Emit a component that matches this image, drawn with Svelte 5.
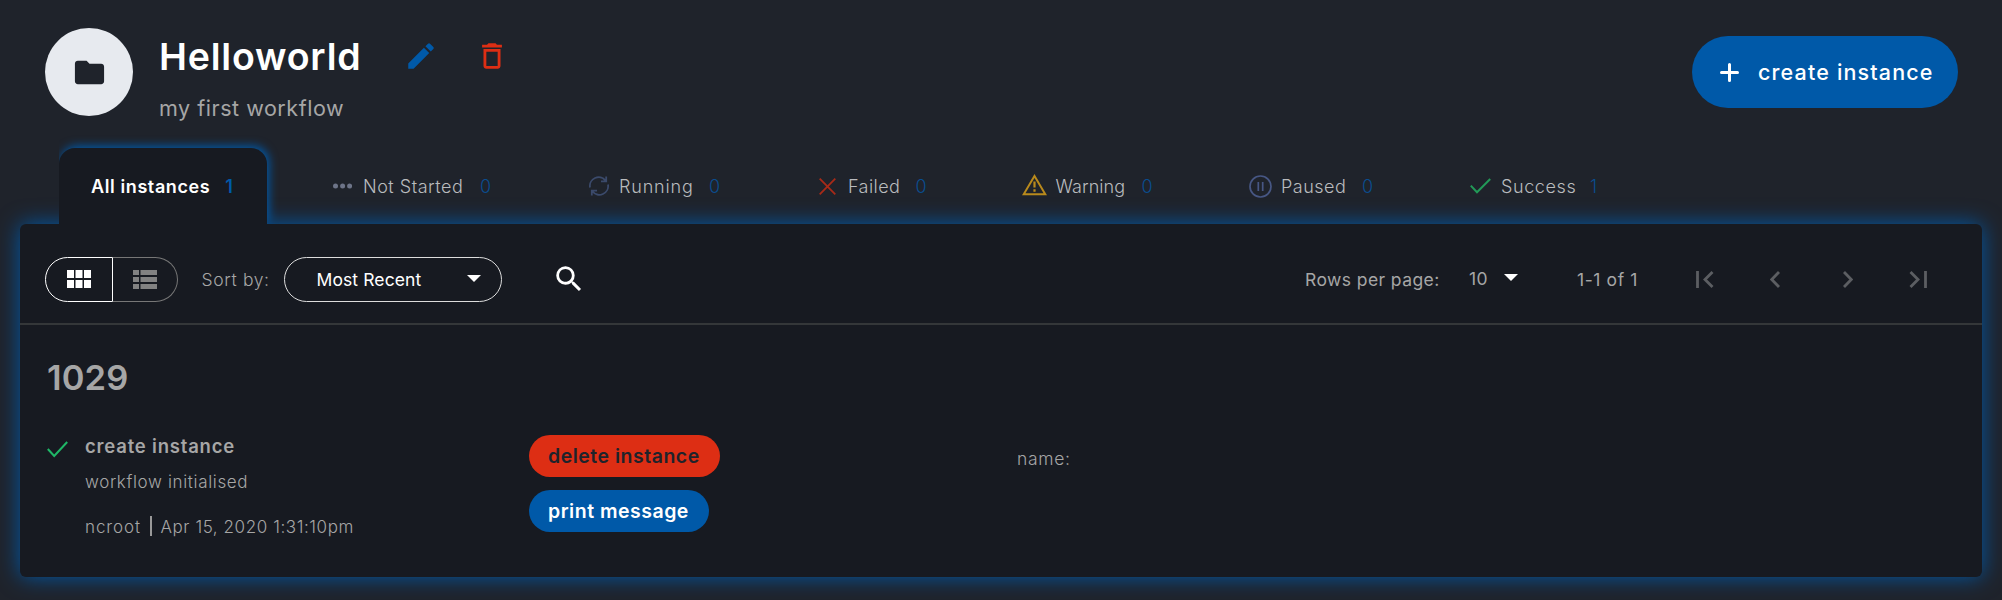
<script>
  // gap: space before the tab; icon / label / count: column widths in px
  const tabs = [
    { name: 'Not Started', count: 0, icon: 'dots', gap: 66, iconW: 30, labelW: 117, countW: 13, ls: 0.51 },
    { name: 'Running', count: 0, icon: 'sync', gap: 96, iconW: 30, labelW: 90, countW: 13, ls: 0.83 },
    { name: 'Failed', count: 0, icon: 'cross', gap: 97, iconW: 29, labelW: 67.5, countW: 13, ls: 0.42 },
    { name: 'Warning', count: 0, icon: 'warning', gap: 93.5, iconW: 33.5, labelW: 86, countW: 13, ls: 0.05 },
    { name: 'Paused', count: 0, icon: 'pause', gap: 94.5, iconW: 32, labelW: 81, countW: 13, ls: 0.5 },
    { name: 'Success', count: 1, icon: 'check', gap: 94.5, iconW: 31.5, labelW: 89, countW: 13, ls: 0.6 }
  ];
</script>

<div class="page">
  <header>
    <div class="avatar">
      <svg width="35" height="35" viewBox="0 0 24 24"><path fill="#1f232b" d="M10 4H4c-1.100 0-2 .9-2 2v12c0 1.100.9 2 2 2h16c1.100 0 2-.9 2-2V8c0-1.100-.9-2-2-2h-8z"/></svg>
    </div>
    <div class="heading">
      <div class="title-row">
        <h1>Helloworld</h1>
        <svg class="edit" width="34" height="34" viewBox="0 0 24 24"><path fill="#0059a8" d="M3 17.250V21h3.750L17.810 9.940l-3.750-3.750zM20.710 7.040a1 1 0 0 0 0-1.410l-2.340-2.340a1 1 0 0 0-1.410 0l-1.830 1.830 3.750 3.750z"/></svg>
        <svg class="trash" width="34" height="34" viewBox="0 0 24 24"><path fill="#dd2e14" d="M6 19c0 1.100.9 2 2 2h8c1.100 0 2-.9 2-2V7H6zM8 9h8v10H8zM15.500 4l-1-1h-5l-1 1H5v2h14V4z"/></svg>
      </div>
      <p>my first workflow</p>
    </div>
    <button class="create">
      <svg width="19" height="19" viewBox="0 0 19 19"><path d="M9.500 1.500v16M1.500 9.500h16" stroke="#fff" stroke-width="3" stroke-linecap="round"/></svg>
      <span>create instance</span>
    </button>
  </header>

  <nav>
    <div class="active"><span>All instances</span><b>1</b></div>
    {#each tabs as t}
      <div class="tab" style:margin-left="{t.gap}px">
        <i style:width="{t.iconW}px">
          {#if t.icon === 'dots'}
            <svg width="19" height="6" viewBox="0 0 19 6" fill="#6d7488"><circle cx="2.500" cy="3" r="2.500"/><circle cx="9.600" cy="3" r="2.500"/><circle cx="16.600" cy="3" r="2.500"/></svg>
          {:else if t.icon === 'sync'}
            <svg width="20" height="20" viewBox="0 0 20 20" fill="none" stroke="#3b4a6b" stroke-width="1.800"><path d="M1 11.500A8.800 8.800 0 0 1 16.500 4.500M17.200 0.500v4.800h-5.200M19 8.500A8.800 8.800 0 0 1 3.500 15.500M2.800 19.500v-4.800h5.200"/></svg>
          {:else if t.icon === 'cross'}
            <svg width="17" height="17" viewBox="0 0 17 17" fill="none" stroke="#a82a18" stroke-width="1.800"><path d="M.7.7l15.600 15.600M16.300.7L.7 16.300"/></svg>
          {:else if t.icon === 'warning'}
            <svg class="up" width="25" height="22" viewBox="0 0 25 22" fill="none" stroke="#b98a1c" stroke-width="2"><path d="M12.500 2L23.300 20.300H1.700z"/><path d="M12.500 7.500v6M12.500 15.200v2.600" stroke-width="2.200"/></svg>
          {:else if t.icon === 'pause'}
            <svg width="23" height="23" viewBox="0 0 23 23" fill="none" stroke="#475784" stroke-width="1.700"><circle cx="11.500" cy="11.500" r="10.500"/><path d="M9.300 7v9M13.700 7v9"/></svg>
          {:else}
            <svg width="21" height="16" viewBox="0 0 21 16" fill="none" stroke="#229a58" stroke-width="2"><path d="M.8 7.600L7 14.200 20.200 1"/></svg>
          {/if}
        </i>
        <span style:width="{t.labelW}px" style:letter-spacing="{t.ls}px">{t.name}</span>
        <em style:width="{t.countW}px">{t.count}</em>
      </div>
    {/each}
  </nav>

  <main>
    <div class="toolbar">
      <div class="toggle">
        <div class="on"><svg width="24" height="18" viewBox="0 0 24 18" fill="#fff"><path d="M0 0h7v8H0zM8.500 0h7v8h-7zM17 0h7v8h-7zM0 10h7v8H0zM8.500 10h7v8h-7zM17 10h7v8h-7z"/></svg></div>
        <div class="off"><svg width="24" height="19" viewBox="0 0 24 19" fill="#828282"><path d="M0 0h6v5H0zM7.500 0H24v5H7.500zM0 7h6v5H0zM7.500 7H24v5H7.500zM0 14h6v5H0zM7.500 14H24v5H7.500z"/></svg></div>
      </div>
      <span class="sort">Sort by:</span>
      <div class="select"><span>Most Recent</span><svg width="14" height="7" viewBox="0 0 14 7"><path fill="#fff" d="M0 0h14L7 7z"/></svg></div>
      <svg class="search" width="34" height="34" viewBox="0 0 24 24"><path fill="#fff" d="M15.500 14h-.79l-.28-.27A6.470 6.470 0 0 0 16 9.500 6.500 6.500 0 1 0 9.500 16c1.610 0 3.090-.59 4.230-1.570l.27.280v.79l5 4.990L20.490 19zm-6 0C7.010 14 5 11.990 5 9.500S7.010 5 9.500 5 14 7.010 14 9.500 11.990 14 9.500 14z"/></svg>
      <div class="pager">
        <span class="rows">Rows per page:</span>
        <span class="ten">10</span>
        <svg class="caret" width="14" height="7" viewBox="0 0 14 7"><path fill="#fff" d="M0 0h14L7 7z"/></svg>
        <span class="range">1-1 of 1</span>
        <svg width="18" height="17" viewBox="0 0 18 17" fill="none" stroke="#5c5e62" stroke-width="2.800"><path d="M1.500 0v17M16.500 1L9 8.500l7.500 7.500"/></svg>
        <svg class="prev" width="10" height="17" viewBox="0 0 10 17" fill="none" stroke="#5c5e62" stroke-width="2.800"><path d="M9 1L1.700 8.500 9 16"/></svg>
        <svg class="next" width="10" height="17" viewBox="0 0 10 17" fill="none" stroke="#5c5e62" stroke-width="2.800"><path d="M1 1l7.300 7.500L1 16"/></svg>
        <svg class="last" width="18" height="17" viewBox="0 0 18 17" fill="none" stroke="#5c5e62" stroke-width="2.800"><path d="M16.500 0v17M1.500 1L9 8.500 1.500 16"/></svg>
      </div>
    </div>

    <h2>1029</h2>
    <div class="instance">
      <svg class="done" width="21" height="17" viewBox="0 0 21 17" fill="none" stroke="#1fb767" stroke-width="2"><path d="M.8 8L7.200 15 20.200 1"/></svg>
      <div class="info">
        <h3>create instance</h3>
        <p>workflow initialised</p>
        <div class="meta"><span class="user">ncroot</span><span class="bar"></span><span class="date">Apr 15, 2020 1:31:10pm</span></div>
      </div>
      <div class="actions">
        <button class="delete">delete instance</button>
        <button class="print">print message</button>
      </div>
      <div class="field">name:</div>
    </div>
  </main>
</div>

<style>
  :global(body) { background: #1f232b; }
  * { box-sizing: border-box; margin: 0; }
  svg { display: block; flex: none; }
  .page { width: 2002px; height: 600px; overflow: hidden; background: #1f232b; font-family: Inter, sans-serif; color: #a6a6a6; white-space: nowrap; padding: 28px 20px 0; }

  header { display: flex; height: 120px; padding: 0 24px 0 25px; }
  .avatar { width: 88px; height: 88px; border-radius: 50%; background: #e7eaef; display: flex; align-items: center; justify-content: center; padding-top: 1px; padding-left: 1px; }
  .heading { margin-left: 26px; padding-top: 5px; }
  .title-row { display: flex; align-items: center; height: 48px; }
  h1 { width: 245px; font-size: 37.500px; font-weight: 600; letter-spacing: .8px; line-height: 48px; color: #fff; }
  .edit { margin-top: -2px; }
  .trash { margin: -2px 0 0 37px; }
  .heading p { margin: 12px 0 0 0; font-size: 21.500px; line-height: 30px; letter-spacing: .54px; }
  button { border: 0; font-family: inherit; }
  .create { margin: 8px 0 0 auto; width: 266px; height: 72px; border-radius: 36px; background: #0059a8; color: #fff; display: flex; align-items: center; padding: 0 0 0 28px; font-size: 21.500px; font-weight: 500; letter-spacing: 1.150px; }
  .create span { margin-left: 19px; }

  nav { display: flex; height: 76px; font-size: 18px; }
  .active { position: relative; z-index: 2; margin-left: 39px; width: 208px; height: 76px; padding: 0 0 0 32px; display: flex; align-items: center; background: #171a21; border-radius: 16px 16px 0 0; color: #fff; font-weight: 600; letter-spacing: .6px; box-shadow: 2px -2px 10px #0059a8; clip-path: inset(-20px -20px 0 0); }
  .active b { margin-left: 15px; color: #0059a8; font-weight: 600; }
  .tab { position: relative; z-index: 2; display: flex; align-items: center; height: 76px; font-weight: 300; color: #b9bbbe; }
  .tab i { display: block; }
  .tab em { font-style: normal; color: #0a4d8f; }
  .up { margin-top: -3px; }

  main { position: relative; z-index: 1; height: 353px; border-radius: 6px; background: #171a21; box-shadow: 0 0 22px #0059a8; }
  .toolbar { display: flex; align-items: center; height: 101px; border-bottom: 2px solid #343739; padding: 11px 54px 0 25px; font-size: 17.500px; }
  .toggle { display: flex; width: 133px; height: 45px; }
  .on { width: 68px; border: 1.500px solid #fff; border-radius: 23px 0 0 23px; padding: 12px 0 0 21px; }
  .off { width: 65px; border: 1px solid #777; border-left: 0; border-radius: 0 23px 23px 0; padding: 12px 0 0 20px; }
  .sort { margin-left: 23.500px; width: 82.500px; font-weight: 300; letter-spacing: .65px; }
  .select { width: 218px; height: 45px; border: 1px solid #ddd; border-radius: 23px; color: #fff; display: flex; align-items: center; padding-left: 31.500px; letter-spacing: .11px; }
  .select span { width: 150px; padding-top: 1px; }
  .select svg { margin-top: -2px; }
  .search { margin-left: 50px; margin-top: -1px; }
  .pager { display: flex; align-items: center; margin-left: auto; }
  .rows { width: 164px; letter-spacing: .42px; }
  .ten { width: 35px; letter-spacing: .5px; margin-top: -2px; }
  .caret { margin-top: -4px; }
  .range { margin-left: 59px; width: 119px; letter-spacing: .6px; }
  .prev { margin-left: 56px; }
  .next { margin-left: 63px; }
  .last { margin-left: 56px; margin-right: 1px; }

  h2 { margin: 33px 0 0 27px; font-size: 34.500px; font-weight: 600; line-height: 40px; letter-spacing: .1px; }
  .instance { display: flex; padding-left: 27px; margin-top: 35px; }
  .done { margin-top: 8px; }
  .info { margin-left: 17px; width: 444px; }
  h3 { font-size: 18.500px; font-weight: 600; line-height: 26px; letter-spacing: .8px; }
  .info p { margin-top: 11px; font-size: 17px; font-weight: 300; line-height: 24px; letter-spacing: .65px; }
  .meta { display: flex; align-items: center; height: 24px; margin-top: 21px; font-size: 17px; font-weight: 300; }
  .user { width: 64.500px; letter-spacing: .9px; }
  .bar { width: 2px; height: 20px; background: #999; margin-top: -2px; }
  .date { margin-left: 9px; letter-spacing: .58px; }
  .actions { width: 488px; padding-top: 2px; display: flex; flex-direction: column; gap: 13px; }
  .actions button { height: 42px; border-radius: 21px; font-size: 19.500px; font-weight: 600; letter-spacing: .5px; text-align: left; padding: 0 0 0 19px; }
  .delete { width: 191px; background: #dd2e14; color: #1f232b; }
  .print { width: 180px; background: #0059a8; color: #fff; }
  .field { font-size: 17.500px; font-weight: 300; line-height: 24px; letter-spacing: .67px; padding-top: 14px; }
</style>
